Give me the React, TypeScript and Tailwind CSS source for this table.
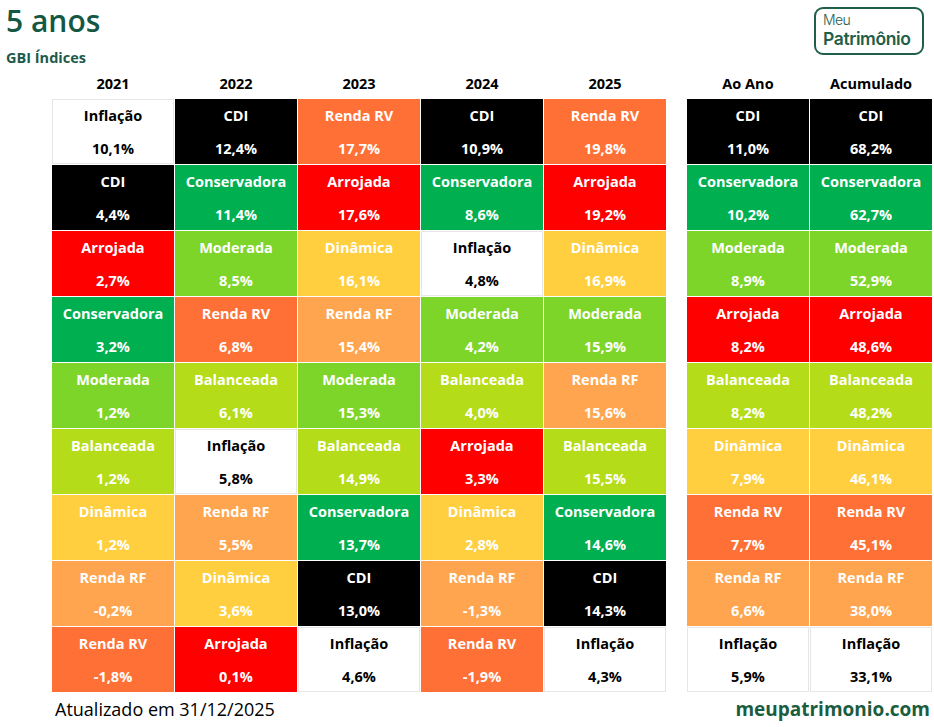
import React from 'react';

type Cell = [string, string];

const STYLE: Record<string, string> = {
  'Inflação': 'bg-white text-black shadow-[inset_0_0_0_1px_#e6e6e6]',
  'CDI': 'bg-black text-white',
  'Renda RV': 'bg-[#ff7036] text-white',
  'Arrojada': 'bg-[#ff0000] text-white',
  'Conservadora': 'bg-[#00b050] text-white',
  'Moderada': 'bg-[#7ed52a] text-white',
  'Balanceada': 'bg-[#b4dc18] text-white',
  'Dinâmica': 'bg-[#ffcf3f] text-white',
  'Renda RF': 'bg-[#ffa54f] text-white',
};

const years: { label: string; cells: Cell[] }[] = [
  {
    label: '2021',
    cells: [
      ['Inflação', '10,1%'],
      ['CDI', '4,4%'],
      ['Arrojada', '2,7%'],
      ['Conservadora', '3,2%'],
      ['Moderada', '1,2%'],
      ['Balanceada', '1,2%'],
      ['Dinâmica', '1,2%'],
      ['Renda RF', '-0,2%'],
      ['Renda RV', '-1,8%'],
    ],
  },
  {
    label: '2022',
    cells: [
      ['CDI', '12,4%'],
      ['Conservadora', '11,4%'],
      ['Moderada', '8,5%'],
      ['Renda RV', '6,8%'],
      ['Balanceada', '6,1%'],
      ['Inflação', '5,8%'],
      ['Renda RF', '5,5%'],
      ['Dinâmica', '3,6%'],
      ['Arrojada', '0,1%'],
    ],
  },
  {
    label: '2023',
    cells: [
      ['Renda RV', '17,7%'],
      ['Arrojada', '17,6%'],
      ['Dinâmica', '16,1%'],
      ['Renda RF', '15,4%'],
      ['Moderada', '15,3%'],
      ['Balanceada', '14,9%'],
      ['Conservadora', '13,7%'],
      ['CDI', '13,0%'],
      ['Inflação', '4,6%'],
    ],
  },
  {
    label: '2024',
    cells: [
      ['CDI', '10,9%'],
      ['Conservadora', '8,6%'],
      ['Inflação', '4,8%'],
      ['Moderada', '4,2%'],
      ['Balanceada', '4,0%'],
      ['Arrojada', '3,3%'],
      ['Dinâmica', '2,8%'],
      ['Renda RF', '-1,3%'],
      ['Renda RV', '-1,9%'],
    ],
  },
  {
    label: '2025',
    cells: [
      ['Renda RV', '19,8%'],
      ['Arrojada', '19,2%'],
      ['Dinâmica', '16,9%'],
      ['Moderada', '15,9%'],
      ['Renda RF', '15,6%'],
      ['Balanceada', '15,5%'],
      ['Conservadora', '14,6%'],
      ['CDI', '14,3%'],
      ['Inflação', '4,3%'],
    ],
  },
];

const summary: { label: string; cells: Cell[] }[] = [
  {
    label: 'Ao Ano',
    cells: [
      ['CDI', '11,0%'],
      ['Conservadora', '10,2%'],
      ['Moderada', '8,9%'],
      ['Arrojada', '8,2%'],
      ['Balanceada', '8,2%'],
      ['Dinâmica', '7,9%'],
      ['Renda RV', '7,7%'],
      ['Renda RF', '6,6%'],
      ['Inflação', '5,9%'],
    ],
  },
  {
    label: 'Acumulado',
    cells: [
      ['CDI', '68,2%'],
      ['Conservadora', '62,7%'],
      ['Moderada', '52,9%'],
      ['Arrojada', '48,6%'],
      ['Balanceada', '48,2%'],
      ['Dinâmica', '46,1%'],
      ['Renda RV', '45,1%'],
      ['Renda RF', '38,0%'],
      ['Inflação', '33,1%'],
    ],
  },
];

function Column({ label, cells }: { label: string; cells: Cell[] }) {
  return (
    <div className="flex flex-col">
      <div className="h-[23px] flex items-start justify-center text-[14.5px] font-bold leading-[16px] text-black">
        {label}
      </div>
      <div className="flex flex-col gap-px">
        {cells.map(([name, value], i) => (
          <div key={i} className={`h-[65px] flex flex-col font-bold text-[14.5px] leading-[18px] ${STYLE[name]}`}>
            <div className="h-[34px] flex items-center justify-center pb-[1px]">{name}</div>
            <div className="h-[31px] flex items-center justify-center">{value}</div>
          </div>
        ))}
      </div>
    </div>
  );
}

export default function App() {
  return (
    <div
      className="w-[934px] h-[727px] bg-white relative overflow-hidden"
      style={{ fontFamily: '"Open Sans", "Liberation Sans", sans-serif' }}
    >
      <div className="flex justify-between items-start h-[76px]">
        <div className="pl-[6px] pt-[2px]">
          <div className="text-[30px] leading-[38px] font-semibold text-[#145843]">5 anos</div>
          <div className="text-[14.5px] font-bold leading-[18px] text-[#1d5a4b] mt-[9px]">GBI Índices</div>
        </div>
        <div
          className="mt-[7px] mr-[10px] w-[110px] h-[48px] border-[2.5px] border-[#1f5e47] rounded-[9px] flex flex-col justify-center pl-[7px] text-[#1f5e47]"
          style={{ fontFamily: 'Inter, "Open Sans", sans-serif' }}
        >
          <div className="text-[14px] leading-[16px] font-light tracking-[-0.6px]">Meu</div>
          <div className="text-[17.5px] leading-[22px] font-semibold tracking-[-0.4px]">Patrimônio</div>
        </div>
      </div>
      <div className="flex pl-[52px]">
        <div className="grid grid-cols-[122px_122px_122px_122px_122px] gap-x-px">
          {years.map((y) => (
            <Column key={y.label} label={y.label} cells={y.cells} />
          ))}
        </div>
        <div className="grid grid-cols-[122px_122px] gap-x-px ml-[21px]">
          {summary.map((y) => (
            <Column key={y.label} label={y.label} cells={y.cells} />
          ))}
        </div>
      </div>
      <div className="flex justify-between items-end pl-[55px] pr-[4px] mt-[5px]">
        <div className="text-[18px] leading-[24px] text-black">Atualizado em 31/12/2025</div>
        <div className="text-[19px] leading-[24px] font-bold text-[#1a5c3e]">meupatrimonio.com</div>
      </div>
    </div>
  );
}
